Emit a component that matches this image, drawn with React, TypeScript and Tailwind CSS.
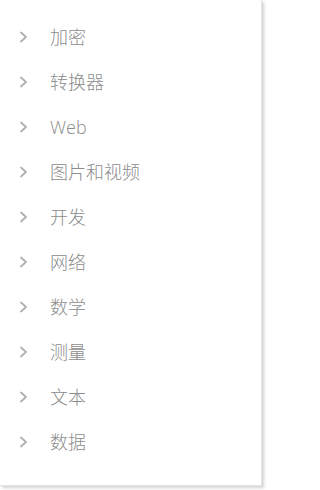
const items = ["加密", "转换器", "Web", "图片和视频", "开发", "网络", "数学", "测量", "文本", "数据"]

function Chevron() {
  return (
    <svg width="10" height="12" viewBox="0 0 10 12" fill="none" className="shrink-0">
      <polyline points="2,1.5 7,6 2,10.5" stroke="#b0b0b0" strokeWidth="1.8" strokeLinecap="round" strokeLinejoin="round" />
    </svg>
  )
}

export default function App() {
  return (
    <div className="w-[266px] h-[490px] bg-white">
      <div className="w-[262px] bg-white pt-[14px] pb-[21px] shadow-[2px_2px_3px_rgba(0,0,0,0.18)] border-r border-b border-[#e4e4e4]">
        {items.map((label) => (
          <div key={label} className="h-[45px] flex items-center pl-[19px]">
            <Chevron />
            <span
              className="ml-[21px] text-[18px] font-light leading-none text-[#8c8c8c]"
              style={{ fontFamily: '"Segoe UI", "Open Sans", "Noto Sans CJK SC", sans-serif' }}
            >
              {label}
            </span>
          </div>
        ))}
      </div>
    </div>
  )
}
